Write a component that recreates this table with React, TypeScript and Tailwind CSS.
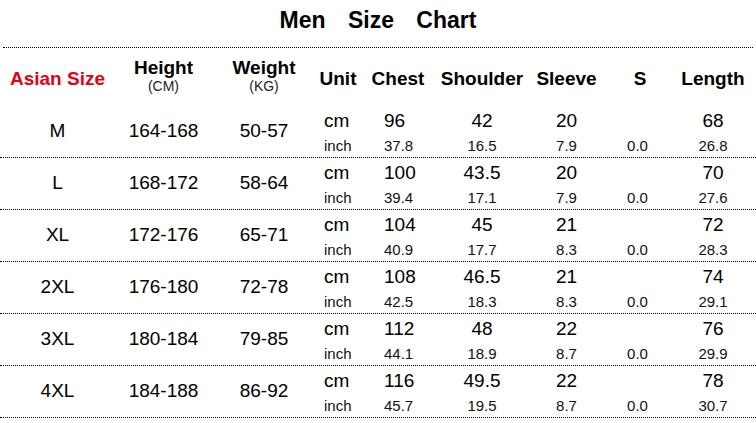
const rows = [
  { size: 'M', height: '164-168', weight: '50-57', cm: ['96', '42', '20', '', '68'], inch: ['37.8', '16.5', '7.9', '0.0', '26.8'] },
  { size: 'L', height: '168-172', weight: '58-64', cm: ['100', '43.5', '20', '', '70'], inch: ['39.4', '17.1', '7.9', '0.0', '27.6'] },
  { size: 'XL', height: '172-176', weight: '65-71', cm: ['104', '45', '21', '', '72'], inch: ['40.9', '17.7', '8.3', '0.0', '28.3'] },
  { size: '2XL', height: '176-180', weight: '72-78', cm: ['108', '46.5', '21', '', '74'], inch: ['42.5', '18.3', '8.3', '0.0', '29.1'] },
  { size: '3XL', height: '180-184', weight: '79-85', cm: ['112', '48', '22', '', '76'], inch: ['44.1', '18.9', '8.7', '0.0', '29.9'] },
  { size: '4XL', height: '184-188', weight: '86-92', cm: ['116', '49.5', '22', '', '78'], inch: ['45.7', '19.5', '8.7', '0.0', '30.7'] },
];

const grid = 'grid grid-cols-[115px_97px_104px_44px_76px_92px_77px_65px_86px]';
// chest is left-aligned in the source, the rest are centred
const measureCls = ['justify-start pl-[24px]', 'justify-center', 'justify-center', 'justify-center', 'justify-center'];

export default function App() {
  return (
    <div className="w-[756px] h-[423px] bg-white text-black font-['Liberation_Sans',Arial,sans-serif] overflow-hidden">
      <div className="h-[48px] mx-[3px] border-b border-dotted border-black flex items-center justify-center">
        <h1 className="text-[23px] font-bold [word-spacing:16px] -mt-[7px]">Men Size Chart</h1>
      </div>

      <div className={`${grid} h-[58px] items-center font-bold text-[19px] leading-none`}>
        <div className="text-center text-[#e60012] pt-[2px]">Asian Size</div>
        <div className="flex flex-col items-center -mt-[4px]">
          <span>Height</span>
          <span className="text-[14px] font-normal text-[#222] mt-[2px]">(CM)</span>
        </div>
        <div className="flex flex-col items-center -mt-[4px]">
          <span>Weight</span>
          <span className="text-[14px] font-normal text-[#222] mt-[2px]">(KG)</span>
        </div>
        <div className="text-center pt-[2px]">Unit</div>
        <div className="text-center pt-[2px]">Chest</div>
        <div className="text-center pt-[2px]">Shoulder</div>
        <div className="text-center pt-[2px]">Sleeve</div>
        <div className="text-center pt-[2px] pl-[5px]">S</div>
        <div className="text-center pt-[2px]">Length</div>
      </div>

      {rows.map((r) => (
        <div key={r.size} className={`${grid} h-[52px] border-b border-dotted border-black`}>
          <div className="flex items-center justify-center text-[19px]">{r.size}</div>
          <div className="flex items-center justify-center text-[19px]">{r.height}</div>
          <div className="flex items-center justify-center text-[19px]">{r.weight}</div>
          <div className="flex flex-col pl-[8px]">
            <span className="h-[30px] flex items-center text-[19px]">cm</span>
            <span className="h-[21px] flex items-center text-[15px] text-[#111]">inch</span>
          </div>
          {r.cm.map((v, i) => (
            <div key={i} className="flex flex-col">
              <span className={`h-[30px] flex items-center text-[19px] ${measureCls[i]}`}>{v}</span>
              <span className={`h-[21px] flex items-center text-[15px] text-[#111] ${measureCls[i]}`}>{r.inch[i]}</span>
            </div>
          ))}
        </div>
      ))}
    </div>
  );
}
